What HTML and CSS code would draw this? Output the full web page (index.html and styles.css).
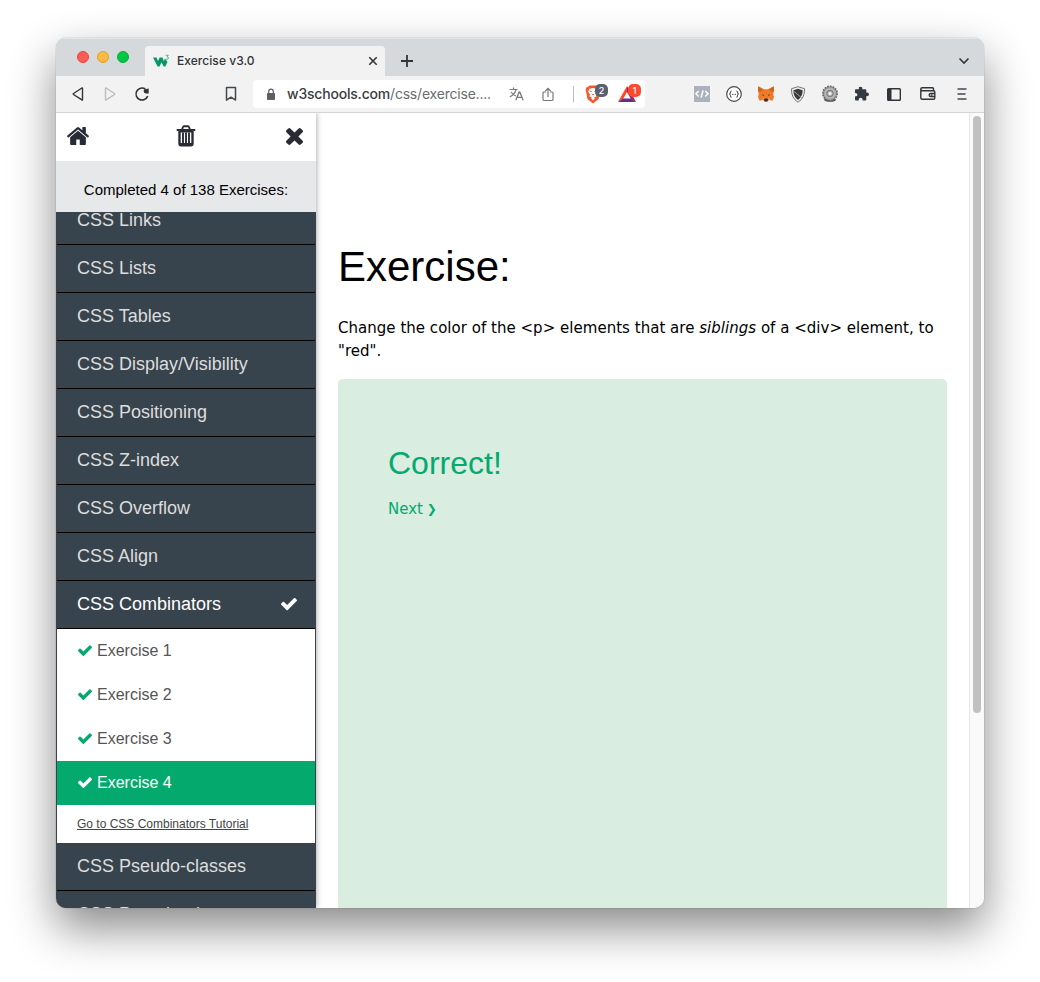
FILE: index.html
```html
<!DOCTYPE html>
<html lang="en">
<head>
<meta charset="utf-8">
<title>Exercise v3.0</title>
<link rel="stylesheet" href="styles.css">
</head>
<body>
<svg class="defs" width="0" height="0">
  <symbol id="check" viewBox="121 398 1550 1134"><path d="M1671 566q0 40-28 68l-724 724-136 136q-28 28-68 28t-68-28l-136-136-362-362q-28-28-28-68t28-68l136-136q28-28 68-28t68 28l294 295 656-657q28-28 68-28t68 28l136 136q28 28 28 68z" fill="currentColor"/></symbol>
</svg>
<div class="window">
  <header class="tabstrip">
    <div class="lights"><i class="light red"></i><i class="light amber"></i><i class="light green"></i></div>
    <div class="tab">
      <svg width="17" height="14" viewBox="0 0 17 14"><path d="M0 3.500h3.600l1.400 3.700 1.500-3.700h3l1.400 3.700 1-2.700 2.600 3.500-2.200 4.500h-1.600L8.500 8.300 6.500 12.500H4.600z" fill="#079669"/><path d="M12.700 1.300h2.600L14.200 2.900q1.600.2 1.200 1.600-.6 1.100-2.500.5" fill="none" stroke="#43b791" stroke-width="1"/></svg>
      <span class="tab-title">Exercise v3.0</span>
      <svg width="10" height="10" viewBox="0 0 10 10"><path d="M1.300 1.300l7.400 7.400M8.700 1.300L1.300 8.700" stroke="#303539" stroke-width="1.600"/></svg>
    </div>
    <svg class="plus" width="12" height="12" viewBox="0 0 12 12"><path d="M6 0v12M0 6h12" stroke="#303539" stroke-width="1.800"/></svg>
    <svg class="chevron" width="12" height="8" viewBox="0 0 12 8"><path d="M1.500 1.500 6 6l4.500-4.500" fill="none" stroke="#303539" stroke-width="1.600"/></svg>
  </header>
  <nav class="toolbar">
    <span class="slot"><svg width="14" height="16" viewBox="0 0 14 16"><path d="M11.500 2.300v11.400q0 .6-.6.200L2.500 8.500q-.6-.5 0-1L10.900 2q.6-.3.6.3z" fill="none" stroke="#303539" stroke-width="1.400"/></svg></span>
    <span class="slot"><svg width="14" height="16" viewBox="0 0 14 16"><path d="M2.500 2.300v11.400q0 .6.600.2l8.400-5.400q.6-.5 0-1L3.100 2q-.6-.3-.6.3z" fill="none" stroke="#bbbdbe" stroke-width="1.400"/></svg></span>
    <span class="slot"><svg width="16" height="16" viewBox="0 0 16 16"><path d="M11.300 3A6 6 0 1 0 13.700 10" fill="none" stroke="#303539" stroke-width="1.600"/><path d="M14.700 2.500v5h-3q-2-.2-2-2.200V4.500q0-1.200 1.300-1.300z" fill="#303539"/></svg></span>
    <span class="slot bookmark"><svg width="12" height="16" viewBox="0 0 12 16"><path d="M1.500 1.500h9v12.600L6 11.200l-4.500 2.900z" fill="none" stroke="#44484c" stroke-width="1.500" stroke-linejoin="round"/></svg></span>
    <div class="address">
      <svg class="lock" width="10" height="13" viewBox="0 0 10 13"><rect x="1" y="5" width="8" height="7" rx=".8" fill="#5b6066"/><path d="M2.700 5.500V3.700a2.300 2.500 0 0 1 4.600 0v1.800" fill="none" stroke="#5b6066" stroke-width="1.200"/></svg>
      <span class="url"><b>w3schools.com</b>/css/exercise....</span>
      <svg class="translate" width="15" height="14" viewBox="0 0 15 14"><path d="M.5 2.500h8M4.500.5v2M2 5q2 3 5 4M7 3Q5 8 .8 9.800" fill="none" stroke="#77797c" stroke-width="1.200"/><path d="M6.800 13.300 10.200 5h.5l3.500 8.300M8 10.300h5" fill="none" stroke="#77797c" stroke-width="1.300"/></svg>
      <svg class="share" width="12" height="15" viewBox="0 0 12 15"><path d="M4 5H2Q1 5 1 6v6.500q0 1 1 1h8q1 0 1-1V6q0-1-1-1H8M6 10V1.500M3.300 4 6 1.300 8.700 4" fill="none" stroke="#77797c" stroke-width="1.200"/></svg>
      <i class="divider"></i>
      <span class="shield-icon brave">
        <svg width="16" height="19" viewBox="0 0 16 19"><path d="M4.500.5h7L13 2l1.500.2.9 2.500-.5 1.800-1.300 7.500L8 18.500 2.400 14 1.100 6.500.6 4.700 1.500 2.200 3 2z" fill="#fb542b"/><path d="M4.500 3.700 8 3l3.500.7 1.500 3-2 2.500.6 2.200-2.200.8.300 1.500L8 15.500l-1.700-1.800.3-1.500-2.200-.8L5 9.200l-2-2.500z" fill="#fff"/><path d="M4.700 6l2 .6M11.300 6l-2 .6M6.900 9 8 10l1.100-1" stroke="#fb542b" stroke-width=".9" fill="none"/></svg>
        <em class="badge gray">2</em>
      </span>
      <span class="shield-icon bat">
        <svg width="18" height="16" viewBox="0 0 18 16"><path d="M9 0 0 16l5.200-3.200L9 6z" fill="#ff4724"/><path d="M9 0v6l3.800 6.800L18 16z" fill="#9e1f63"/><path d="m0 16 5.200-3.500h7.600L18 16z" fill="#662d91"/></svg>
        <em class="badge orange">1</em>
      </span>
    </div>
    <div class="extensions">
      <span class="slot"><svg width="16" height="16" viewBox="0 0 16 16"><path d="M0 0h16v16H0z" fill="#abb1bd"/><path d="M4.700 5 2 7.800l2.700 2.700M11.300 5 14 7.800l-2.700 2.700M9.100 4.500l-2 7" fill="none" stroke="#fff" stroke-width="1.500"/></svg></span>
      <span class="slot"><svg width="16" height="16" viewBox="0 0 16 16"><circle cx="8" cy="8" r="7.300" fill="#fff" stroke="#4a4a4a" stroke-width="1.200"/><path d="M5.700 5Q4.500 5 4.500 6.300T3.300 8q1.200.2 1.200 1.700T5.700 11M10.300 5q1.200 0 1.200 1.300T12.700 8q-1.200.2-1.200 1.700T10.300 11" fill="none" stroke="#555" stroke-width="1.100"/><path d="M6 8.400h4" stroke="#555" stroke-dasharray="1 .5"/></svg></span>
      <span class="slot"><svg width="16" height="16" viewBox="0 0 16 16"><path d="M.3.300 6 3.300h4L15.700.3 16 5l-.8 3 .8 3-1.500 3.800-3.500-.8-1.500 1.500H6.500L5 14l-3.500.8L0 11l.8-3L0 5z" fill="#ee7a2a"/><path d="M.3.300 5 3.800 1.800 6 0 5zM15.700.3 11 3.800 14.200 6 16 5z" fill="#c9661f"/><path d="M3.700 8.300 6 9l-.5 1zM12.300 8.300 10 9l.5 1z" fill="#263442"/><path d="m5.800 13.500 1-1h2.400l1 1-1 2H6.800z" fill="#382b29"/><path d="m4.800 12 1.100.2-.5 1.300-1.300.2zM11.200 12l-1.100.2.500 1.300 1.300.2z" fill="#d7bcaa"/></svg></span>
      <span class="slot"><svg width="16" height="17" viewBox="0 0 16 17"><path d="M8 .7 14.500 2.700Q15 12 8 16.200 1 12 1.500 2.700z" fill="#eee" stroke="#777"/><path d="M8 2.800 12.600 4.300q.2 6.400-4.600 9.700Q3.200 10.700 3.400 4.300z" fill="#3a3a3a"/><path d="M3.500 5 12 12.200" stroke="#aaa" stroke-width=".9"/></svg></span>
      <span class="slot"><svg width="18" height="18" viewBox="0 0 18 18"><ellipse cx="9" cy="14.800" rx="6" ry="2" fill="#555"/><circle cx="9" cy="8.500" r="7.200" fill="#999" stroke="#666" stroke-width="1.600" stroke-dasharray="1.700 1.100"/><circle cx="9" cy="8.500" r="5.500" fill="#bbb" stroke="#aaa"/><circle cx="9" cy="8.500" r="3.300" fill="#aaa" stroke="#777"/><circle cx="9" cy="8.500" r="1.600" fill="#f4f4f4"/></svg></span>
      <span class="slot"><svg width="16" height="16" viewBox="0 0 16 16"><path d="M1 4q0-.8.800-.8h3.100Q4.300.8 6.500.8t1.900 2.400h3q.9 0 .9.900v2.500q2.700-.4 2.700 1.700t-2.700 1.800v3.400q0 .9-.9.900H8.600q.2-2.700-1.900-2.700t-2 2.700H1.900q-.9 0-.9-.9v-3q2.500 0 2.500-1.800T1 7z" fill="#343a3f"/></svg></span>
      <span class="slot"><svg width="14" height="13" viewBox="0 0 14 13"><rect x=".7" y=".7" width="12.600" height="11.600" rx=".8" fill="none" stroke="#303539" stroke-width="1.400"/><path d="M1 1h3.500v11H1z" fill="#303539"/></svg></span>
      <span class="slot wallet"><svg width="16" height="14" viewBox="0 0 16 14"><path d="M13.500 3.500V2q0-1.200-1.200-1.200H2.200Q.8.800.8 2.100v8.600q0 1.500 1.500 1.500h11.200q1.300 0 1.300-1.300V5q0-1.300-1.300-1.300H2.500Q.8 3.700.8 2.300M15 6.500h-4.300q-1.500 0-1.500 1.500t1.500 1.500H15M11.300 8h1" fill="none" stroke="#303539" stroke-width="1.400"/></svg></span>
      <span class="slot menu"><svg width="10" height="12" viewBox="0 0 10 12"><path d="M.5 1h9M.5 6h8M.5 11h9" stroke="#44484d" stroke-width="1.500"/></svg></span>
    </div>
  </nav>
  <div class="page">
    <aside class="sidebar">
      <div class="actions">
        <svg width="22" height="18" viewBox="89 250 1614 1290" preserveAspectRatio="none"><path d="M1472 992v480q0 26-19 45t-45 19h-384v-384h-256v384h-384q-26 0-45-19t-19-45v-480q0-1 .5-3t.5-3l575-474 575 474q1 2 1 6zm223-69l-62 74q-8 9-21 11h-3q-13 0-21-7l-692-577-692 577q-12 8-24 7-13-2-21-11l-62-74q-8-10-7-23.500t11-21.500l719-599q32-26 76-26t76 26l244 204v-195q0-14 9-23t23-9h192q14 0 23 9t9 23v408l219 182q10 8 11 21.500t-7 23.500z" fill="#282a35"/></svg>
        <svg class="trash" width="20" height="22" viewBox="0 0 20 22"><path d="M.7 5h18.600M6 4.500 7 2q.2-.8 1-.8h4q.8 0 1 .8l1 2.500" fill="none" stroke="#282a35" stroke-width="1.900"/><path d="M3.500 5.500V18.200q0 2 1.500 2h10q1.500 0 1.500-2V5.500" fill="#fff" stroke="#282a35" stroke-width="2.400"/><path d="M7 7.500v10.500M10 7.500v10.500M13 7.500v10.500" stroke="#282a35" stroke-width="1.900"/><path d="M4 19.300h12M4 6.300h12" stroke="#282a35" stroke-width="2.400"/></svg>
        <svg width="17" height="17" viewBox="302 366 1188 1188"><path d="M1490 1322q0 40-28 68l-136 136q-28 28-68 28t-68-28l-294-294-294 294q-28 28-68 28t-68-28l-136-136q-28-28-28-68t28-68l294-294-294-294q-28-28-28-68t28-68l136-136q28-28 68-28t68 28l294 294 294-294q28-28 68-28t68 28l136 136q28 28 28 68t-28 68l-294 294 294 294q28 28 28 68z" fill="#282a35"/></svg>
      </div>
      <div class="progress">Completed 4 of 138 Exercises:</div>
      <div class="list">
        <div class="row first">CSS Links</div>
        <div class="row">CSS Lists</div>
        <div class="row">CSS Tables</div>
        <div class="row">CSS Display/Visibility</div>
        <div class="row">CSS Positioning</div>
        <div class="row">CSS Z-index</div>
        <div class="row">CSS Overflow</div>
        <div class="row">CSS Align</div>
        <div class="row open">CSS Combinators<svg width="16" height="13"><use href="#check"/></svg></div>
        <div class="sub"><svg width="14" height="12"><use href="#check"/></svg>Exercise 1</div>
        <div class="sub"><svg width="14" height="12"><use href="#check"/></svg>Exercise 2</div>
        <div class="sub"><svg width="14" height="12"><use href="#check"/></svg>Exercise 3</div>
        <div class="sub current"><svg width="14" height="12"><use href="#check"/></svg>Exercise 4</div>
        <div class="tutorial"><span>Go to CSS Combinators Tutorial</span></div>
        <div class="row">CSS Pseudo-classes</div>
        <div class="row">CSS Pseudo-elements</div>
      </div>
    </aside>
    <main class="main">
      <h1>Exercise:</h1>
      <p class="task"><span class="line">Change the color of the &lt;p&gt; elements that are <i>siblings</i> of a &lt;div&gt; element, to</span><br>"red".</p>
      <section class="result">
        <h2>Correct!</h2>
        <span class="next">Next <span class="arrow">❯</span></span>
      </section>
    </main>
    <div class="scrollbar"><i class="thumb"></i></div>
  </div>
</div>
</body>
</html>
```
FILE: styles.css
```css
* { box-sizing: border-box; }
body { margin: 0; width: 1040px; height: 982px; overflow: hidden; padding: 38px 56px; background: #fff; font-family: "Liberation Sans", Arial, sans-serif; }
svg { display: block; flex: none; }
.defs { position: absolute; }
.window { width: 928px; height: 870px; border-radius: 10px; overflow: hidden; display: flex; flex-direction: column; background: #fff; box-shadow: 0 0 1px rgba(0,0,0,.55), 0 20px 46px rgba(0,0,0,.47); }
.tabstrip { height: 38px; flex: none; background: #d5d9dc; display: flex; align-items: flex-end; box-shadow: inset 0 1px #e3e6e8; }
.lights { width: 89px; height: 38px; padding-left: 21px; display: flex; align-items: center; gap: 8px; }
.light { width: 12px; height: 12px; border-radius: 50%; }
.red { background: #ff5a55; border: 1px solid #e2453f; }
.amber { background: #febb40; border: 1px solid #e0a02f; }
.green { background: #00c845; border: 1px solid #0cab35; }
.tab { width: 240px; height: 30px; background: #f2f2f2; border-radius: 4px 4px 0 0; display: flex; align-items: center; padding: 0 7px 0 8px; }
.tab-title { flex: 1; margin-left: 7px; font: 500 12px/16px Inter, sans-serif; color: #303539; letter-spacing: .05px; }
.plus { margin: 0 0 9px 16px; }
.chevron { margin: 0 14px 11px auto; }
.toolbar { height: 37px; flex: none; background: #f2f2f2; border-bottom: 1px solid #d4d5d6; display: flex; align-items: center; padding-left: 6px; }
.slot { width: 32px; height: 36px; flex: none; display: flex; align-items: center; justify-content: center; }
.bookmark { margin-left: 57px; }
.address { width: 392px; height: 28px; margin-left: 6px; background: #fff; border-radius: 4px; display: flex; align-items: center; flex: none; }
.lock { margin-left: 13px; }
.url { width: 205px; margin-left: 11px; font: 14px/18px Inter, sans-serif; letter-spacing: -.2px; color: #6a6c6f; white-space: nowrap; }
.url b { font-weight: 500; color: #393c3f; }
.translate { margin-left: 17px; }
.share { margin-left: 18px; }
.divider { width: 1px; height: 16px; margin-left: 19px; background: #bbb; }
.shield-icon { position: relative; display: block; }
.brave { margin-left: 11px; }
.bat { margin-left: 17px; }
.badge { position: absolute; width: 13px; height: 13px; border-radius: 5px; color: #fff; font: 500 9px/13px Inter, sans-serif; text-align: center; }
.gray { left: 10px; top: -1px; background: #5a6070; }
.orange { left: 10px; top: -2px; background: #fb4b2f; }
.extensions { display: flex; margin-left: 41px; }
.wallet { margin-left: 2px; }
.menu { margin-left: 2px; }
.page { flex: 1; min-height: 0; display: flex; overflow: hidden; }
.sidebar { width: 260px; flex: none; display: flex; flex-direction: column; box-shadow: 0 0 6px rgba(0,0,0,.4); overflow: hidden; background: #38444d; }
.actions { height: 48px; flex: none; background: #fff; display: flex; justify-content: space-between; align-items: center; padding: 0 13px 2px 11px; }
.trash { margin-right: 4px; }
.progress { height: 51px; flex: none; background: #e7e8ea; text-align: center; font-size: 15px; line-height: 57px; color: #000; }
.list { flex: 1; min-height: 0; overflow: hidden; padding: 0 1px; font-size: 18px; }
.row { height: 48px; padding: 0 18px 0 20px; display: flex; align-items: center; justify-content: space-between; background: #38444d; border-bottom: 1px solid #000; color: #ddd; }
.first { margin-top: -15px; }
.open { color: #fff; }
.sub { height: 44px; padding-left: 21px; display: flex; align-items: center; gap: 5px; background: #fff; color: #555; font-size: 16px; }
.sub svg { color: #04aa6d; }
.current, .current svg { background: #04aa6d; color: #fff; }
.tutorial { height: 38px; padding-left: 20px; background: #fff; font-size: 12px; line-height: 38px; color: #444; text-decoration: underline; }
.main { width: 653px; flex: none; padding: 128px 22px 0; overflow: hidden; display: flex; flex-direction: column; }
h1 { margin: 0; font-weight: 400; font-size: 42px; line-height: 52px; color: #000; }
.task { margin: 24px 0 0; font: 15px/23px "DejaVu Sans", Verdana, sans-serif; letter-spacing: .026px; white-space: nowrap; }
.result { flex: 1; margin-top: 16px; background: #d9eee1; border-radius: 5px 5px 0 0; padding: 60px 50px; color: #04aa6d; }
h2 { margin: 0; font-weight: 400; font-size: 32px; line-height: 48px; }
.next { display: block; margin-top: 11px; font: 15px/23px "DejaVu Sans", Verdana, sans-serif; }
.arrow { margin-left: -1px; font-size: 12px; font-weight: 700; vertical-align: 1px; line-height: 1; }
.scrollbar { width: 15px; background: #fafafa; border-left: 1px solid #e6e6e6; padding: 3px 3px 0; }
.thumb { display: block; width: 8px; height: 597px; border-radius: 4px; background: #c1c1c1; }
```
